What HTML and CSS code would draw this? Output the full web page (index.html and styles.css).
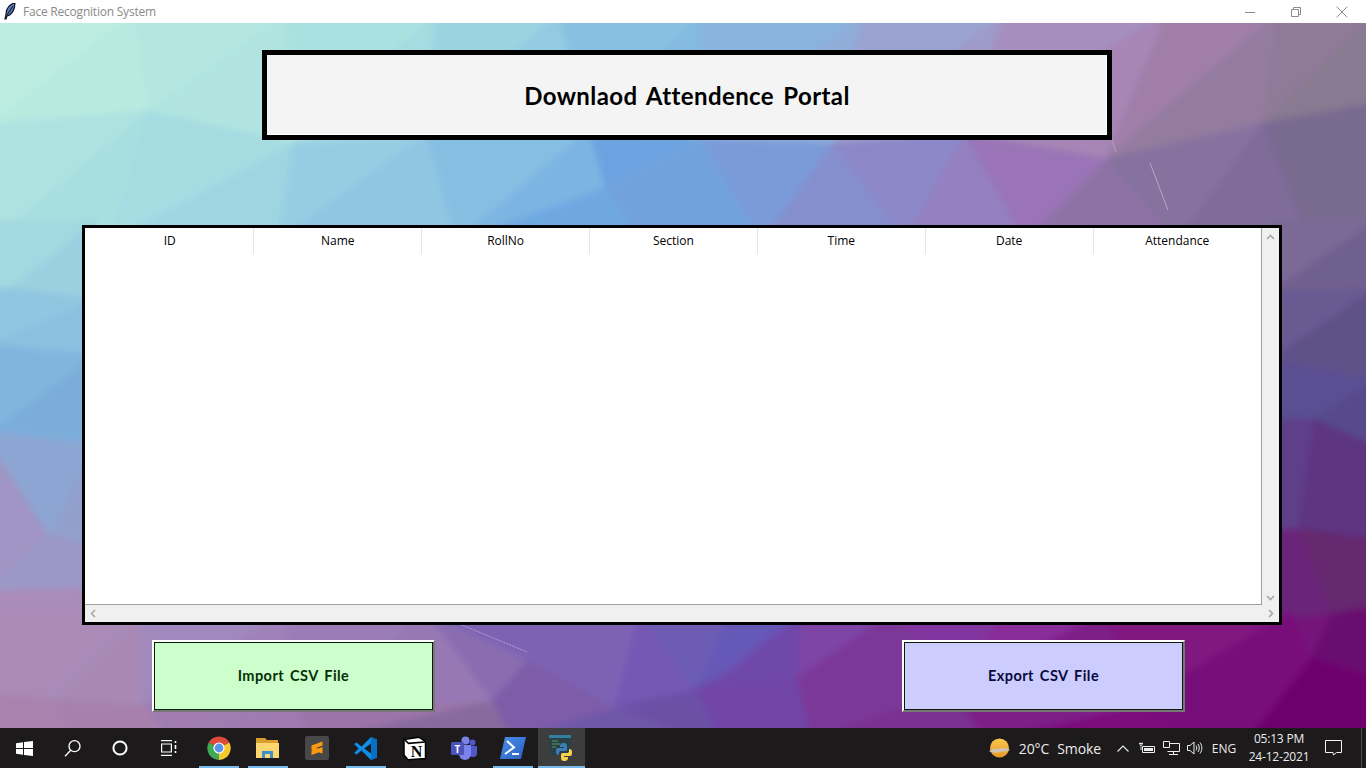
FILE: index.html
```html
<!DOCTYPE html>
<html lang="en">
<head>
  <meta charset="UTF-8" />
  <title>Face Recognition System</title>
  <meta name="viewport" content="width=device-width, initial-scale=1" />
  <link rel="stylesheet" href="styles.css">
</head>
<body>

  <div class="titlebar">
    <svg class="app-icon" width="12" height="17" viewBox="0 0 12 17">
      <path d="M11 0C6 1 2 5 2 11L1 16 2 16 3 13C8 12 11 6 11 0Z" fill="#5b7db8" stroke="#0a0f1e" stroke-width="1.1"/>
      <path d="M9 3 3 12" stroke="#0a0f1e" stroke-width="1"/>
    </svg>
    <span class="app-name">Face Recognition System</span>
    <div class="win-controls">
      <span class="win-btn"><svg width="10" height="10" viewBox="0 0 10 10"><path d="M0 5.5H10" stroke="#8c8c8c"/></svg></span>
      <span class="win-btn"><svg width="10" height="10" viewBox="0 0 10 10" fill="none" stroke="#8c8c8c"><path d="M.5 2.5H7.5V9.5H.5Z M2.5 2.5V.5H9.5V7.5H7.5"/></svg></span>
      <span class="win-btn"><svg width="12" height="12" viewBox="0 0 12 12"><path d="M.5.5 11.5 11.5M11.5.5.5 11.5" stroke="#8c8c8c"/></svg></span>
    </div>
  </div>

  <main class="window">
    <!-- low poly wallpaper, coords are screen coords -->
    <svg class="wallpaper" viewBox="0 23 1366 705" preserveAspectRatio="none">
      <polygon fill="#bdede1" points="0,23 140,23 0,130"/>
      <polygon fill="#b8eae0" points="140,23 155,118 0,130"/>
      <polygon fill="#b5e7e0" points="140,23 290,23 155,118"/>
      <polygon fill="#b1e4e0" points="290,23 300,150 155,118"/>
      <polygon fill="#abe0e0" points="290,23 440,23 300,150"/>
      <polygon fill="#a5dbe1" points="440,23 430,140 300,150"/>
      <polygon fill="#9bd3e1" points="440,23 560,23 430,140"/>
      <polygon fill="#93cbe2" points="560,23 590,135 430,140"/>
      <polygon fill="#88c0e1" points="560,23 700,23 590,135"/>
      <polygon fill="#84b9e0" points="700,23 700,145 590,135"/>
      <polygon fill="#8ab3dd" points="700,23 860,23 700,145"/>
      <polygon fill="#90add8" points="860,23 830,150 700,145"/>
      <polygon fill="#9aa3cf" points="860,23 1000,23 830,150"/>
      <polygon fill="#9f9bc8" points="1000,23 960,140 830,150"/>
      <polygon fill="#a68fbe" points="1000,23 1160,23 960,140"/>
      <polygon fill="#a786b5" points="1160,23 1100,165 960,140"/>
      <polygon fill="#a07ea8" points="1160,23 1270,23 1100,165"/>
      <polygon fill="#947c9e" points="1270,23 1255,130 1100,165"/>
      <polygon fill="#8f7a98" points="1270,23 1366,23 1255,130"/>
      <polygon fill="#887a90" points="1366,23 1366,110 1255,130"/>

      <polygon fill="#aee2e0" points="0,130 155,118 0,245"/>
      <polygon fill="#a8dee0" points="155,118 120,245 0,245"/>
      <polygon fill="#a5dbe1" points="155,118 300,150 120,245"/>
      <polygon fill="#9ed5e1" points="300,150 283,245 120,245"/>
      <polygon fill="#97cde2" points="300,150 430,140 283,245"/>
      <polygon fill="#8fc6e2" points="430,140 460,245 283,245"/>
      <polygon fill="#86bee2" points="430,140 590,135 460,245"/>
      <polygon fill="#7cb5e2" points="590,135 606,193 460,245"/>
      <polygon fill="#6fa8e1" points="606,193 640,245 460,245"/>
      <polygon fill="#6ba3e0" points="590,135 700,145 606,193"/>
      <polygon fill="#72a2dd" points="606,193 700,145 760,245 640,245"/>
      <polygon fill="#7a9bd8" points="700,145 830,150 760,245"/>
      <polygon fill="#868fce" points="830,150 900,245 760,245"/>
      <polygon fill="#8c88c8" points="830,150 960,140 900,245"/>
      <polygon fill="#9480c0" points="960,140 1020,245 900,245"/>
      <polygon fill="#9a74b6" points="960,140 1100,165 1020,245"/>
      <polygon fill="#8e72a6" points="1100,165 1170,245 1020,245"/>
      <polygon fill="#86729e" points="1100,165 1255,130 1170,245"/>
      <polygon fill="#7f6c98" points="1255,130 1300,245 1170,245"/>
      <polygon fill="#796a90" points="1255,130 1366,110 1366,245 1300,245"/>

      <polygon fill="#a3d8e0" points="0,225 104,225 20,290 0,290"/>
      <polygon fill="#9cd0e0" points="104,225 104,300 20,290"/>
      <polygon fill="#90c6e0" points="0,290 20,290 104,300 0,345"/>
      <polygon fill="#8cc0e0" points="0,345 104,300 104,355"/>
      <polygon fill="#80b5de" points="0,345 104,355 0,430"/>
      <polygon fill="#7cadda" points="0,430 104,355 104,442"/>
      <polygon fill="#8ca5d2" points="0,442 0,430 104,442 58,530"/>
      <polygon fill="#929fcc" points="104,442 104,540 58,530"/>
      <polygon fill="#a095c4" points="0,442 58,530 0,585"/>
      <polygon fill="#9c97c6" points="58,530 104,540 104,582 0,585"/>
      <polygon fill="#ab8bba" points="0,585 104,582 55,662 0,685"/>
      <polygon fill="#a98cbc" points="104,582 104,640 55,662"/>
      <polygon fill="#ab82ad" points="0,685 55,662 60,728 0,728"/>

      <polygon fill="#7b6a96" points="1262,225 1366,225 1262,295"/>
      <polygon fill="#70608f" points="1366,225 1366,290 1262,295"/>
      <polygon fill="#6a5a92" points="1262,295 1366,290 1262,360"/>
      <polygon fill="#5f5288" points="1366,290 1366,380 1262,360"/>
      <polygon fill="#5a4f92" points="1262,360 1366,380 1305,418 1262,418"/>
      <polygon fill="#564a8c" points="1366,380 1366,445 1305,418"/>
      <polygon fill="#5f3f8a" points="1262,418 1305,418 1290,525 1262,525"/>
      <polygon fill="#5e3580" points="1305,418 1366,445 1366,535 1290,525"/>
      <polygon fill="#6a257a" points="1262,525 1290,525 1322,608 1262,612"/>
      <polygon fill="#66286e" points="1290,525 1366,535 1366,600 1322,608"/>
      <polygon fill="#75157a" points="1262,612 1322,608 1303,650 1262,650"/>
      <polygon fill="#6a0d70" points="1322,608 1366,600 1366,670 1303,650"/>

      <polygon fill="#ab8ab8" points="0,605 150,605 60,690 0,685"/>
      <polygon fill="#a988b4" points="150,605 150,695 60,690"/>
      <polygon fill="#aa82ae" points="0,685 60,690 80,730 0,730"/>
      <polygon fill="#a880ae" points="60,690 150,695 180,730 80,730"/>
      <polygon fill="#a188bd" points="150,605 290,605 150,695"/>
      <polygon fill="#a080b8" points="290,605 300,700 150,695"/>
      <polygon fill="#a07cb0" points="150,695 300,700 180,730"/>
      <polygon fill="#a07ab0" points="300,700 320,730 180,730"/>
      <polygon fill="#9b7cb8" points="290,605 430,605 300,700"/>
      <polygon fill="#9878b4" points="430,605 495,692 300,700"/>
      <polygon fill="#9c74a8" points="300,700 495,692 320,730"/>
      <polygon fill="#8a6a9e" points="495,692 515,730 320,730"/>
      <polygon fill="#8a6cb0" points="430,605 530,652 495,692"/>
      <polygon fill="#7e5ca8" points="495,692 530,652 615,698 515,730"/>
      <polygon fill="#7d62b4" points="430,605 640,605 615,698 530,652"/>
      <polygon fill="#7058a8" points="515,730 615,698 700,730"/>
      <polygon fill="#7458b4" points="640,605 695,680 615,698"/>
      <polygon fill="#6c50a6" points="615,698 695,680 720,730 700,730"/>
      <polygon fill="#6c5cb4" points="640,605 730,605 695,680"/>
      <polygon fill="#6658b6" points="730,605 800,605 730,662 695,680"/>
      <polygon fill="#7048aa" points="800,605 795,670 695,680 730,662"/>
      <polygon fill="#7145a6" points="695,680 795,670 810,730 720,730"/>
      <polygon fill="#7e44a6" points="800,605 890,605 795,670"/>
      <polygon fill="#7c3898" points="795,670 890,605 950,680 810,730"/>
      <polygon fill="#82359e" points="890,605 1000,605 950,680"/>
      <polygon fill="#7c3090" points="810,730 950,680 980,730"/>
      <polygon fill="#8a2c9a" points="1000,605 1100,605 950,680"/>
      <polygon fill="#7e1f88" points="950,680 1100,605 1120,700 980,730"/>
      <polygon fill="#801880" points="1100,605 1282,605 1120,700"/>
      <polygon fill="#7d0c7c" points="980,730 1120,700 1240,730"/>
      <polygon fill="#780e7a" points="1120,700 1282,605 1303,650 1240,730"/>
      <polygon fill="#6e006e" points="1240,730 1303,650 1366,670 1366,730"/>
    </svg>
    <svg class="streaks" viewBox="0 23 1366 705">
      <path d="M1150 163 1168 210" stroke="#d8c8e0" stroke-width="1" opacity=".6"/>
      <path d="M1112 140 1116 152" stroke="#d8c8e0" stroke-width="1" opacity=".4"/>
      <path d="M462 625 527 652" stroke="#d8c8e8" stroke-width="1" stroke-dasharray="2 1" opacity=".6"/>
    </svg>

    <div class="heading-box">
      <h1>Downlaod Attendence Portal</h1>
    </div>

    <div class="table-frame">
      <div class="table-view">
        <table class="records">
          <thead>
            <tr>
              <th>ID</th>
              <th>Name</th>
              <th>RollNo</th>
              <th>Section</th>
              <th>Time</th>
              <th>Date</th>
              <th>Attendance</th>
            </tr>
          </thead>
        </table>
      </div>
      <div class="scroll-y">
        <svg width="9" height="6" viewBox="0 0 9 6"><path d="M1 5 4.5 1.5 8 5" fill="none" stroke="#a8a8a8" stroke-width="1.6"/></svg>
        <svg width="9" height="6" viewBox="0 0 9 6"><path d="M1 1 4.5 4.5 8 1" fill="none" stroke="#a8a8a8" stroke-width="1.6"/></svg>
      </div>
      <div class="scroll-x">
        <svg width="6" height="9" viewBox="0 0 6 9"><path d="M5 1 1.5 4.5 5 8" fill="none" stroke="#a8a8a8" stroke-width="1.6"/></svg>
        <svg width="6" height="9" viewBox="0 0 6 9"><path d="M1 1 4.5 4.5 1 8" fill="none" stroke="#a8a8a8" stroke-width="1.6"/></svg>
      </div>
    </div>

    <div class="actions">
      <button class="csv-btn import">Import CSV File</button>
      <button class="csv-btn export">Export CSV File</button>
    </div>
  </main>

  <footer class="taskbar">
    <div class="task-left">
      <span class="shell-btn">
        <svg width="17" height="15" viewBox="0 0 17 15" fill="#fff"><path d="M0 2.2 7 1.2V7H0ZM8 1 17 0V7H8ZM0 8H7V13.8L0 12.8ZM8 8H17V15L8 14Z"/></svg>
      </span>
      <span class="shell-btn">
        <svg width="17" height="17" viewBox="0 0 17 17" fill="none" stroke="#fff" stroke-width="1.3"><circle cx="10.5" cy="6.2" r="5.5"/><path d="M6.7 10.2 1 16.2"/></svg>
      </span>
      <span class="shell-btn">
        <svg width="16" height="16" viewBox="0 0 16 16" fill="none"><circle cx="8" cy="8" r="6.6" stroke="#fff" stroke-width="2"/></svg>
      </span>
      <span class="shell-btn">
        <svg width="17" height="16" viewBox="0 0 17 16" fill="none" stroke="#fff" stroke-width="1.2"><path d="M1 .6H12M1 15.4H12M1.6 4H11.4V12H1.6Z"/><path d="M15.5 1V3M15.5 5V9M15.5 11V13" stroke-width="1.6"/></svg>
      </span>
      <span class="app-btn running">
        <svg width="24" height="24" viewBox="0 0 24 24">
          <path d="M12 12 1.6 6.5A12 12 0 0 1 22.4 6.5Z" fill="#e04a3a"/>
          <path d="M12 12 22.4 6.5A12 12 0 0 1 12 24Z" fill="#f8c92c"/>
          <path d="M12 12 12 24A12 12 0 0 1 1.6 6.5Z" fill="#3fa855"/>
          <circle cx="12" cy="12" r="5.6" fill="#fff"/>
          <circle cx="12" cy="12" r="4.4" fill="#5a93e8"/>
        </svg>
      </span>
      <span class="app-btn running">
        <svg width="23" height="20" viewBox="0 0 23 20">
          <path d="M0 0H9L11 2H22V6H0Z" fill="#d99e2b"/>
          <path d="M0 5H23V20H0Z" fill="#fbd671"/>
          <path d="M6 20V13H17V20H14V16H9V20Z" fill="#3f8fc9"/>
        </svg>
      </span>
      <span class="app-btn">
        <svg width="24" height="24" viewBox="0 0 24 24">
          <rect width="24" height="24" rx="2" fill="#484848"/>
          <path d="M6.500 9.500 17.500 5.500V9.500L6.500 13.500ZM6.500 10.500 17.500 14V17.500L6.500 14ZM6.500 15 17.500 11V15L6.500 19Z" fill="#ff9a0e"/>
        </svg>
      </span>
      <span class="app-btn running">
        <svg width="25" height="25" viewBox="0 0 25 25">
          <path d="M18 1 8.5 10.4 3.6 6.6 1 8 5.6 12.5 1 17 3.6 18.4 8.5 14.6 18 24 24 21.5V3.5ZM18 7.4V17.6L11.2 12.5Z" fill="#0f8ce6" fill-rule="evenodd"/>
          <path d="M18 1 24 3.5V21.5L18 24V17.6 7.4Z" fill="#0670c4"/>
        </svg>
      </span>
      <span class="app-btn">
        <svg width="25" height="25" viewBox="0 0 25 25">
          <path d="M2 3.5 17 1.2 23.5 5.5V22.5L6 23.8 2 19Z" fill="#fff" stroke="#000" stroke-width="1.5"/>
          <path d="M3 4 6.5 7.4 23 6" fill="none" stroke="#000" stroke-width="1.6"/>
          <text class="notion-n" x="14.5" y="21" text-anchor="middle">N</text>
        </svg>
      </span>
      <span class="app-btn">
        <svg width="26" height="24" viewBox="0 0 26 24">
          <circle cx="14.5" cy="4.5" r="4" fill="#7b83eb"/>
          <circle cx="21.5" cy="6.5" r="3" fill="#5059c9"/>
          <path d="M18 10H26V17A4 4 0 0 1 18 17Z" fill="#5059c9"/>
          <path d="M8 9H20V18A6 6 0 0 1 8 18Z" fill="#7b83eb"/>
          <rect y="6" width="13" height="13" rx="1.5" fill="#4b53bc"/>
          <text class="teams-t" x="6.5" y="16.5" text-anchor="middle">T</text>
        </svg>
      </span>
      <span class="app-btn running">
        <svg width="26" height="22" viewBox="0 0 26 22">
          <defs><linearGradient id="psBlue" x1="0" y1="0" x2="1" y2="1"><stop offset="0" stop-color="#4a8fe8"/><stop offset="1" stop-color="#2a5fc4"/></linearGradient></defs>
          <path d="M5 0H26L21 22H0Z" fill="url(#psBlue)"/>
          <path d="M7 4 14 10.5 5 17" fill="none" stroke="#fff" stroke-width="2"/>
          <path d="M12 17H19" stroke="#fff" stroke-width="2"/>
        </svg>
      </span>
      <span class="app-btn active">
        <svg width="25" height="27" viewBox="0 0 25 27">
          <rect width="22" height="20" fill="#2b3f46"/>
          <rect width="22" height="3" fill="#2f7f9e"/>
          <path d="M3 6H9M3 9H11M3 12H7" stroke="#4f9d6a"/>
          <path d="M15 8C11 8 11 10 11 12H15V13H9C7 13 7 15 7 17S8 20 10 20V18C10 16.500 11 16 12 16H16C18 16 18 15 18 14V11C18 9 17 8 15 8Z" fill="#3d7fb5"/>
          <path d="M15 26C19 26 19 24 19 22H15V21H21C23 21 23 19 23 17S22 14 20 14V16C20 17.500 19 18 18 18H14C12 18 12 19 12 20V23C12 25 13 26 15 26Z" fill="#f7d24c"/>
        </svg>
      </span>
    </div>

    <div class="task-right">
      <svg class="weather-icon" width="21" height="20" viewBox="0 0 21 20">
        <defs><linearGradient id="sun" x1="0" y1="0" x2="0" y2="1"><stop offset="0" stop-color="#f9c84e"/><stop offset="1" stop-color="#e8982a"/></linearGradient></defs>
        <circle cx="10.500" cy="10" r="9.500" fill="url(#sun)"/>
        <path d="M0 13C4 10 7 10 10 11 14 9 18 10 21 12 18 14 14 13 11 14 7 15 3 15 0 13Z" fill="#cfc4b4"/>
      </svg>
      <span class="weather-text">20°C</span>
      <span class="weather-text smoke">Smoke</span>
      <span class="tray-item">
        <svg width="12" height="7" viewBox="0 0 12 7"><path d="M.5 6.500 6 1 11.500 6.500" fill="none" stroke="#eee" stroke-width="1.100"/></svg>
      </span>
      <span class="tray-item">
        <svg width="16" height="12" viewBox="0 0 16 12" fill="none" stroke="#eee"><path d="M3.500 4.500H15.500V10.500H3.500Z"/><path d="M5 6H14V9H5Z" fill="#eee" stroke="none"/><path d="M0 1.500H4M1 .5V3C1 4 3 4 3 3V.5M2 4.500V8" stroke-width=".9"/></svg>
      </span>
      <span class="tray-item">
        <svg width="17" height="14" viewBox="0 0 17 14" fill="none" stroke="#eee"><path d="M4.500 2.500H16.500V10.500H4.500M10.500 10.500V13.500M6 13.500H15"/><path d="M.5.5H6.500V6.500H.5Z" fill="#1c1a1b"/></svg>
      </span>
      <span class="tray-item">
        <svg width="16" height="14" viewBox="0 0 16 14" fill="none" stroke="#eee"><path d="M.5 4.500H3L7 1V13L3 9.500H.5Z"/><path d="M9 4.500C10 6 10 8 9 9.500M11 3C12.700 5.500 12.700 8.500 11 11M13 1.500C15.500 5 15.500 9 13 12.500"/></svg>
      </span>
      <span class="lang">ENG</span>
      <span class="clock">
        <span>05:13 PM</span>
        <span>24-12-2021</span>
      </span>
      <span class="notify">
        <svg width="17" height="16" viewBox="0 0 17 16" fill="none" stroke="#f2f2f2"><path d="M.5.5H16.500V12.500H11.500L8.500 15 8 12.500H.5Z"/></svg>
      </span>
      <span class="show-desktop"></span>
    </div>
  </footer>

</body>
</html>
```

FILE: styles.css
```css
body {
  margin: 0;
  height: 768px;
  overflow: hidden;
  display: flex;
  flex-direction: column;
  font-family: "Open Sans", "Noto Sans", sans-serif;
}

/* title bar */
.titlebar {
  position: relative;
  z-index: 1;
  height: 23px;
  background: #fff;
  display: flex;
  align-items: center;
  flex-shrink: 0;
}
.app-icon {
  margin-left: 4px;
}
.app-name {
  margin-left: 7px;
  font-size: 12px;
  letter-spacing: -.22px;
  color: #8a8a8a;
}
.win-controls {
  margin-left: auto;
  margin-right: 1px;
  display: flex;
}
.win-btn {
  width: 46px;
  height: 23px;
  display: flex;
  align-items: center;
  justify-content: center;
}

/* main window */
.window {
  position: relative;
  flex: 1;
  overflow: hidden;
  padding-top: 27px;
  background: linear-gradient(135deg, #bdede1, #6ba3e0 45%, #7a3fa0 80%, #65006a);
}
.wallpaper {
  position: absolute;
  top: -10px;
  left: -10px;
  width: calc(100% + 20px);
  height: calc(100% + 20px);
  filter: blur(3px);
}
.streaks {
  position: absolute;
  top: 0;
  left: 0;
  width: 100%;
  height: 100%;
}
.heading-box {
  position: relative;
  box-sizing: border-box;
  width: 850px;
  height: 90px;
  margin-left: 262px;
  border: 5px solid #000;
  background: #f4f4f4;
  box-shadow: inset -1px -1px 0 #fff;
  display: flex;
  align-items: center;
  justify-content: center;
}
.heading-box h1 {
  margin: 0;
  font-family: "Lato", sans-serif;
  font-size: 24px;
  font-weight: 700;
  letter-spacing: .4px;
  word-spacing: 3px;
  color: #000;
}

.table-frame {
  position: relative;
  box-sizing: border-box;
  width: 1200px;
  height: 400px;
  margin: 85px 0 0 82px;
  border: 3px solid #000;
  background: #fff;
  display: grid;
  grid-template-columns: 1fr 17px;
  grid-template-rows: 1fr 17px;
}
.table-view {
  padding-left: 1px;
  border-right: 1px solid #a0a0a0;
  border-bottom: 1px solid #a0a0a0;
  overflow: hidden;
}
.records {
  width: 100%;
  table-layout: fixed;
  border-collapse: collapse;
}
.records th {
  height: 26px;
  padding: 0 0 2px;
  box-sizing: border-box;
  font-size: 12px;
  font-weight: 400;
  color: #000;
  border-right: 1px solid #e5e5e5;
}
.records th:last-child {
  border-right: none;
}
.scroll-y {
  background: #f0f0f0;
  display: flex;
  flex-direction: column;
  justify-content: space-between;
  align-items: center;
  padding: 6px 0 4px;
}
.scroll-x {
  grid-column: 1 / 3;
  background: #f0f0f0;
  display: flex;
  justify-content: space-between;
  align-items: center;
  padding: 0 5px;
}

.actions {
  position: relative;
  width: 1033px;
  margin: 15px 0 0 152px;
  display: flex;
  justify-content: space-between;
}
.csv-btn {
  box-sizing: border-box;
  width: 283px;
  height: 72px;
  padding: 0 0 2px;
  border: 2px solid;
  border-color: #fff #777 #777 #fff;
  box-shadow: inset 0 0 0 1px #0c1a0c;
  font-family: "Lato", sans-serif;
  font-size: 14.5px;
  font-weight: 700;
  letter-spacing: .45px;
  word-spacing: 2px;
}
.import {
  background: #ccffcc;
  color: #063006;
}
.export {
  background: #ccccff;
  color: #0a0a3c;
}

/* taskbar */
.taskbar {
  position: relative;
  z-index: 1;
  height: 40px;
  flex-shrink: 0;
  background: #1c1a1b;
  display: flex;
  justify-content: space-between;
  color: #ececec;
}
.task-left, .task-right {
  display: flex;
  align-items: center;
  height: 100%;
}
.shell-btn {
  width: 48px;
  height: 100%;
  display: flex;
  align-items: center;
  justify-content: center;
}
.app-btn {
  position: relative;
  width: 49px;
  height: 100%;
  display: flex;
  align-items: center;
  justify-content: center;
}
.shell-btn + .app-btn {
  margin-left: 2px;
}
.app-btn.running::after {
  content: "";
  position: absolute;
  left: 5px;
  right: 4px;
  bottom: 0;
  height: 2px;
  background: #76b9ed;
}
.app-btn.active {
  margin-left: 1px;
  width: 47px;
  background: #3d3d3d;
  box-shadow: inset 0 -2px 0 #76b9ed;
}
.notion-n {
  font-family: "Liberation Serif", serif;
  font-size: 16px;
  font-weight: 700;
  fill: #000;
}
.teams-t {
  font-family: "Open Sans", sans-serif;
  font-size: 10px;
  font-weight: 700;
  fill: #fff;
}
.weather-icon {
  margin-right: 9px;
}
.weather-text {
  font-size: 14px;
  letter-spacing: -.1px;
}
.weather-text.smoke {
  margin: 0 10px 0 8px;
}
.tray-item {
  width: 24px;
  height: 100%;
  display: flex;
  align-items: center;
  justify-content: center;
}
.lang {
  width: 34px;
  text-align: center;
  font-size: 12px;
}
.clock {
  width: 76px;
  display: flex;
  flex-direction: column;
  align-items: center;
  gap: 2px;
  font-size: 12px;
  letter-spacing: -.2px;
  line-height: 16px;
}
.notify {
  width: 32px;
  height: 100%;
  display: flex;
  align-items: center;
  justify-content: center;
  margin-right: 12px;
}
.show-desktop {
  width: 4px;
  height: 100%;
  border-left: 1px solid #4a4a4a;
}
```
